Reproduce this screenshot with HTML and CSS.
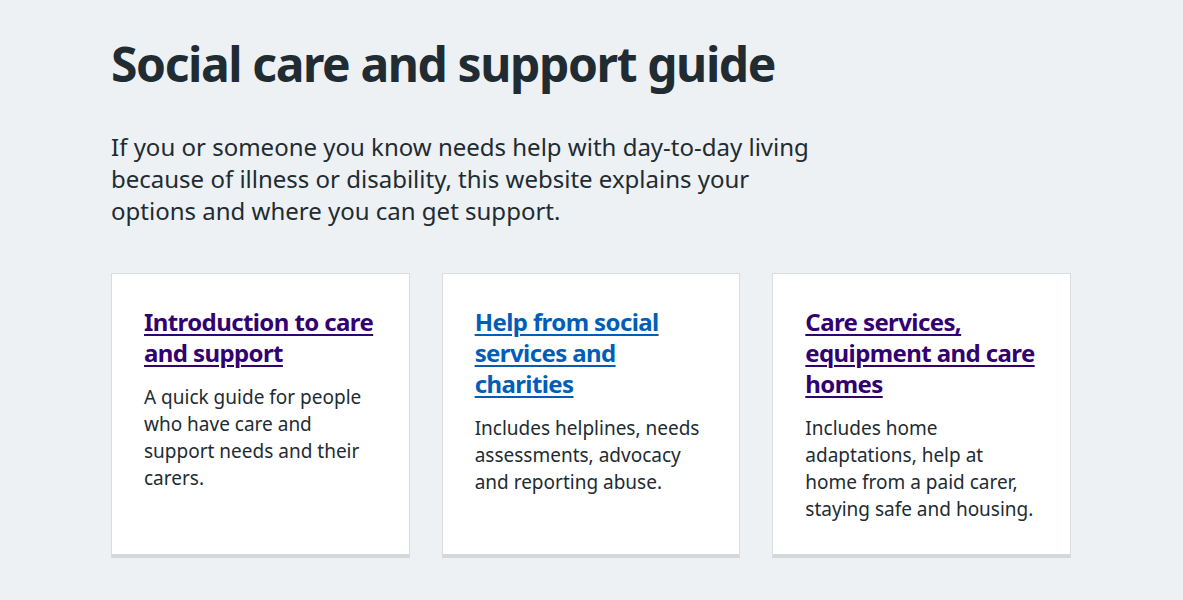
FILE: index.html
```html
<!DOCTYPE html>
<html lang="en">
<head>
<meta charset="utf-8">
<title>Social care and support guide</title>
<link rel="stylesheet" href="styles.css">
</head>
<body>
<main class="page">
  <div class="container">
    <h1 class="title">Social care and support guide</h1>
    <p class="lede">If you or someone you know needs help with day-to-day living because of illness or disability, this website explains your options and where you can get support.</p>
    <ul class="cards">
      <li class="card">
        <h2 class="card-heading"><a class="card-link visited" href="#">Introduction to care and support</a></h2>
        <p class="card-desc">A quick guide for people who have care and support needs and their carers.</p>
      </li>
      <li class="card">
        <h2 class="card-heading"><a class="card-link" href="#">Help from social services and charities</a></h2>
        <p class="card-desc">Includes helplines, needs assessments, advocacy and reporting abuse.</p>
      </li>
      <li class="card">
        <h2 class="card-heading"><a class="card-link visited" href="#">Care services, equipment and care homes</a></h2>
        <p class="card-desc">Includes home adaptations, help at home from a paid carer, staying safe and housing.</p>
      </li>
    </ul>
  </div>
</main>
</body>
</html>
```
FILE: styles.css
```css
html, body {
  margin: 0;
  padding: 0;
  background: #edf1f4;
}
body {
  font-family: "Noto Sans", "Open Sans", sans-serif;
  color: #212b32;
}
.page {
  padding: 36px 1px 0 0;
}
.container {
  width: 960px;
  margin: 0 auto;
}
.title {
  margin: 0 0 39px;
  font-size: 48px;
  line-height: 56px;
  font-weight: 700;
  letter-spacing: -1.4px;
}
.lede {
  margin: 0 0 46px;
  max-width: 720px;
  font-size: 24px;
  line-height: 32px;
  font-weight: 400;
}
.cards {
  list-style: none;
  margin: 0;
  padding: 0;
  display: grid;
  grid-template-columns: repeat(3, 1fr);
  gap: 32px;
}
.card {
  background: #fff;
  border: 1px solid #d8dde0;
  border-bottom: 4px solid #d3d8dc;
  padding: 32px 32px 31px;
}
.card-heading {
  margin: 0 0 16px;
  font-size: 24px;
  line-height: 31px;
  font-weight: 700;
  letter-spacing: -0.6px;
}
.card-link {
  color: #005eb8;
  text-decoration: underline;
  text-decoration-thickness: 2px;
  text-underline-offset: 3px;
}
.card-link.visited {
  color: #330072;
}
.card-desc {
  margin: 0;
  font-size: 19px;
  line-height: 27px;
}
```
